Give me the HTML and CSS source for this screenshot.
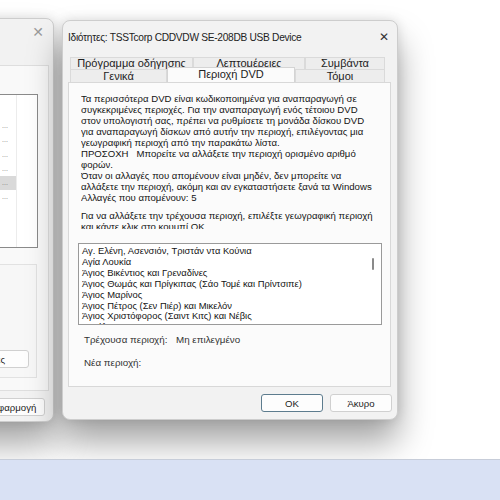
FILE: index.html
```html
<!DOCTYPE html>
<html lang="el">
<head>
    <meta charset="UTF-8">
    <title>Ιδιότητες: TSSTcorp CDDVDW SE-208DB USB Device</title>
    <link rel="stylesheet" href="styles.css">
</head>
<body>
    <div class="desktop">
        <!-- παράθυρο από πίσω, κομμένο στα αριστερά -->
        <div class="window back-window">
            <div class="titlebar">
                <span class="title"></span>
                <span class="close">&#x2715;</span>
            </div>
            <div class="back-panel">
                <div class="back-list">
                    <div class="back-col">
                        <div class="back-row">...</div>
                        <div class="back-row">...</div>
                        <div class="back-row">...</div>
                        <div class="back-row">...</div>
                        <div class="back-row selected">...</div>
                        <div class="back-row">...</div>
                    </div>
                </div>
                <div class="back-group">
                    <button class="btn back-btn">Ιδιότητες</button>
                </div>
            </div>
            <div class="back-footer">
                <button class="btn apply-btn">Εφαρμογή</button>
            </div>
        </div>

        <!-- κύριο παράθυρο διαλόγου -->
        <div class="window dialog">
            <div class="titlebar">
                <span class="title">Ιδιότητες: TSSTcorp CDDVDW SE-208DB USB Device</span>
                <span class="close">&#x2715;</span>
            </div>

            <div class="tabs">
                <div class="tab-row">
                    <div class="tab w1">Πρόγραμμα οδήγησης</div>
                    <div class="tab w2">Λεπτομέρειες</div>
                    <div class="tab w3">Συμβάντα</div>
                </div>
                <div class="tab-row front">
                    <div class="tab w1">Γενικά</div>
                    <div class="tab w2 active">Περιοχή DVD</div>
                    <div class="tab w3">Τόμοι</div>
                </div>
            </div>

            <div class="panel">
                <div class="intro">
                    <p>Τα περισσότερα DVD είναι κωδικοποιημένα για αναπαραγωγή σε<br>συγκεκριμένες περιοχές. Για την αναπαραγωγή ενός τέτοιου DVD<br>στον υπολογιστή σας, πρέπει να ρυθμίσετε τη μονάδα δίσκου DVD<br>για αναπαραγωγή δίσκων από αυτήν την περιοχή, επιλέγοντας μια<br>γεωγραφική περιοχή από την παρακάτω λίστα.<br>ΠΡΟΣΟΧΗ&nbsp;&nbsp;&nbsp;Μπορείτε να αλλάξετε την περιοχή ορισμένο αριθμό<br>φορών.<br>Όταν οι αλλαγές που απομένουν είναι μηδέν, δεν μπορείτε να<br>αλλάξετε την περιοχή, ακόμη και αν εγκαταστήσετε ξανά τα Windows<br>Αλλαγές που απομένουν: 5</p>
                    <p class="second">Για να αλλάξετε την τρέχουσα περιοχή, επιλέξτε γεωγραφική περιοχή<br>και κάντε κλικ στο κουμπί OK.</p>
                </div>

                <div class="listbox">
                    <div class="items">
                        <div>Αγ. Ελένη, Ασενσιόν, Τριστάν ντα Κούνια</div>
                        <div>Αγία Λουκία</div>
                        <div>Άγιος Βικέντιος και Γρεναδίνες</div>
                        <div>Άγιος Θωμάς και Πρίγκιπας (Σάο Τομέ και Πρίντσιπε)</div>
                        <div>Άγιος Μαρίνος</div>
                        <div>Άγιος Πέτρος (Σεν Πιέρ) και Μικελόν</div>
                        <div>Άγιος Χριστόφορος (Σαιντ Κιτς) και Νέβις</div>
                        <div>Αγκόλα</div>
                    </div>
                    <div class="scrollbar"><span class="thumb"></span></div>
                </div>

                <div class="field first">
                    <span class="label">Τρέχουσα περιοχή:</span>
                    <span>Μη επιλεγμένο</span>
                </div>
                <div class="field">
                    <span class="label">Νέα περιοχή:</span>
                    <span></span>
                </div>
            </div>

            <div class="buttons">
                <button class="btn default">OK</button>
                <button class="btn">Άκυρο</button>
            </div>
        </div>
    </div>

    <div class="taskbar"></div>
</body>
</html>
```

FILE: styles.css
```css
body {
    margin: 0;
    width: 500px;
    height: 500px;
    overflow: hidden;
    background: #ffffff;
    font-family: 'Liberation Sans', 'DejaVu Sans', sans-serif;
    color: #1b1b1b;
}

.desktop {
    position: relative;
    height: 459px;
    overflow: hidden;
}

.window {
    position: absolute;
    background: #f2f2f2;
    border: 1px solid #cdcdcd;
    border-radius: 8px;
    box-shadow: 0 22px 34px rgba(0, 0, 0, 0.36), 0 0 12px rgba(0, 0, 0, 0.12);
    display: flex;
    flex-direction: column;
}

.titlebar {
    height: 30px;
    display: flex;
    align-items: center;
    justify-content: space-between;
    padding: 0 8px 0 5px;
    flex-shrink: 0;
}

.title {
    font-size: 10.2px;
    letter-spacing: -0.3px;
    color: #222;
    padding-top: 2px;
}

.close {
    font-family: 'DejaVu Sans', sans-serif;
    font-size: 12px;
    color: #333;
    padding-top: 2px;
}

/* ---- back window ---- */

.back-window {
    left: -250px;
    top: 18px;
    width: 302px;
    height: 402px;
}

.back-window .titlebar {
    height: 26px;
}

.back-window .close {
    color: #9a9a9a;
    font-size: 14px;
    padding-top: 0;
    margin-right: 1px;
}

.back-panel {
    margin: 20px 4px 0 8px;
    height: 326px;
    background: #f9f9f9;
    border: 1px solid #dedede;
    padding: 28px 7px 0 12px;
    box-sizing: border-box;
    display: flex;
    flex-direction: column;
}

.back-list {
    height: 154px;
    margin-right: 3px;
    background: #ffffff;
    border: 1px solid #8a8a8a;
    box-sizing: border-box;
    font-size: 7px;
    color: #777;
}

.back-col {
    width: 244px;
    height: 100%;
    padding-top: 24px;
    box-sizing: border-box;
    border-right: 1px solid #ececec;
}

.back-row {
    height: 14.3px;
    line-height: 14px;
    padding-left: 229px;
    overflow: hidden;
    white-space: nowrap;
}

.back-row.selected {
    background: #d9d9d9;
}

.back-group {
    margin-top: 16px;
    margin-right: 4px;
    height: 114px;
    border: 1px solid #e2e2e2;
    background: #f7f7f7;
    box-sizing: border-box;
    display: flex;
    align-items: flex-end;
    justify-content: flex-end;
    padding: 0 7px 9px 0;
}

.back-btn {
    width: 80px;
    text-align: left;
    padding-left: 38px;
}

.back-footer {
    display: flex;
    justify-content: flex-end;
    padding: 7px 8px 0 0;
}

.apply-btn {
    width: 70px;
    height: 16px;
    border-color: #e3e3e3;
    color: #666;
    background: #f4f4f4;
}

/* ---- main dialog ---- */

.dialog {
    left: 62px;
    top: 20px;
    width: 334px;
    height: 398px;
}

.tabs {
    margin: 6px 0 0 7px;
    position: relative;
    z-index: 1;
}

.tab-row {
    display: flex;
    align-items: flex-end;
    height: 12px;
}

.tab-row.front {
    height: 13px;
}

.tab {
    font-size: 11px;
    text-align: center;
    height: 12px;
    line-height: 10px;
    background: #ededed;
    border: 1px solid #dadada;
    border-bottom: none;
    box-sizing: border-box;
    color: #222;
}

.tab-row.front .tab {
    height: 13px;
    line-height: 12px;
}

.w1 { width: 123px; }
.w2 { width: 112px; }
.w3 { width: 80px; }

.tab-row.front .w1 { width: 97px; }
.tab-row.front .w2 { width: 128px; }
.tab-row.front .w3 { width: 90px; }

.tab-row.front .tab.active {
    background: #fbfbfb;
    height: 15px;
    line-height: 12px;
    border-color: #d4d4d4;
}

.panel {
    margin: 0 6px 0 5px;
    height: 305px;
    background: #fbfbfb;
    border: 1px solid #d8d8d8;
    box-sizing: border-box;
    padding: 10px 4px 0 12px;
}

.intro {
    height: 136px;
    overflow: hidden;
    font-size: 9.6px;
    line-height: 11px;
    white-space: nowrap;
    color: #141414;
}

.intro p {
    margin: 0;
}

.intro p.second {
    margin-top: 7px;
}

.listbox {
    margin-top: 14px;
    margin-left: -3px;
    margin-right: 4px;
    height: 82px;
    background: #ffffff;
    border: 1px solid #9a9a9a;
    box-sizing: border-box;
    display: flex;
    overflow: hidden;
}

.items {
    flex: 1;
    padding: 2px 0 0 3px;
    font-size: 9.4px;
    line-height: 10.9px;
    white-space: nowrap;
    overflow: hidden;
    color: #141414;
}

.scrollbar {
    width: 13px;
    position: relative;
}

.thumb {
    position: absolute;
    left: 4px;
    top: 14px;
    width: 2px;
    height: 12px;
    background: #8a8a8a;
    border-radius: 1px;
}

.field {
    display: flex;
    font-size: 9.8px;
    height: 23px;
    line-height: 23px;
    padding-left: 3px;
    color: #333;
}

.field.first {
    margin-top: 3px;
}

.label {
    width: 92px;
}

.buttons {
    display: flex;
    justify-content: flex-end;
    gap: 7px;
    padding: 7px 5px 0 0;
}

.btn {
    width: 62px;
    height: 18px;
    font-family: 'Liberation Sans', sans-serif;
    font-size: 9.6px;
    color: #222;
    background: #fdfdfd;
    border: 1px solid #d0d0d0;
    border-radius: 3px;
    padding: 0;
}

.btn.default {
    border: 1.5px solid #5d7c8e;
}

.taskbar {
    height: 41px;
    background: #d9e1f4;
    border-top: 1px solid #c7cdd9;
    box-sizing: border-box;
}
```
